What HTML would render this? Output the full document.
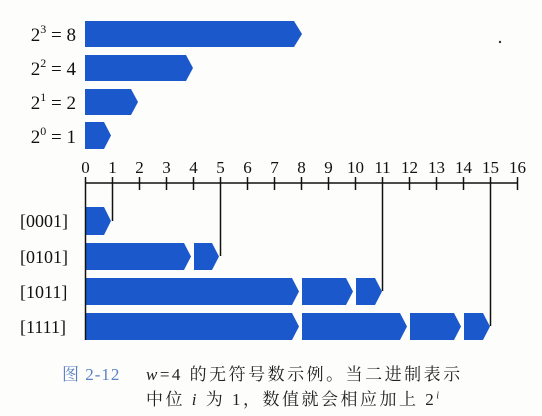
<!DOCTYPE html>
<html><head><meta charset="utf-8"><style>
body{margin:0;background:#fdfdfb;width:542px;height:416px;overflow:hidden;position:relative}
.cap{position:absolute;font-family:"Liberation Serif","Noto Serif CJK SC",serif;font-size:17px;color:#222;white-space:nowrap;letter-spacing:2.5px}
</style></head><body>
<svg width="542" height="416" style="position:absolute;left:0;top:0" font-family="Liberation Serif, serif" fill="#111">
<g fill="#1a58cc">
<polygon points="85,21 294,21 302,34 294,47 85,47"/>
<polygon points="85,55 186,55 193,68 186,81 85,81"/>
<polygon points="85,89 131,89 138,102 131,115 85,115"/>
<polygon points="85,122 104,122 111,135.5 104,149 85,149"/>
<polygon points="85,207 104,207 111,221 104,235 85,235"/>
<polygon points="85,243 184,243 191,256.5 184,270 85,270"/>
<polygon points="194,243 212,243 219,256.5 212,270 194,270"/>
<polygon points="85,278 292,278 299,291.5 292,305 85,305"/>
<polygon points="302,278 346,278 353,291.5 346,305 302,305"/>
<polygon points="356,278 375,278 382,291.5 375,305 356,305"/>
<polygon points="85,313 292,313 299,326.5 292,340 85,340"/>
<polygon points="302,313 400,313 407,326.5 400,340 302,340"/>
<polygon points="410,313 454,313 461,326.5 454,340 410,340"/>
<polygon points="464,313 483,313 490,326.5 483,340 464,340"/>
</g>
<g font-size="19" text-anchor="end">
<text x="76" y="41">2<tspan font-size="12" dy="-8">3</tspan><tspan dy="8"> = 8</tspan></text>
<text x="76" y="75">2<tspan font-size="12" dy="-8">2</tspan><tspan dy="8"> = 4</tspan></text>
<text x="76" y="109">2<tspan font-size="12" dy="-8">1</tspan><tspan dy="8"> = 2</tspan></text>
<text x="76" y="143">2<tspan font-size="12" dy="-8">0</tspan><tspan dy="8"> = 1</tspan></text>
</g>
<g font-size="17" text-anchor="middle">
<text x="85.5" y="173">0</text><text x="112.5" y="173">1</text><text x="139.5" y="173">2</text><text x="166.5" y="173">3</text><text x="193.5" y="173">4</text><text x="220.5" y="173">5</text><text x="247.5" y="173">6</text><text x="274.5" y="173">7</text><text x="301.5" y="173">8</text><text x="328.5" y="173">9</text><text x="355.5" y="173">10</text><text x="382.5" y="173">11</text><text x="409.5" y="173">12</text><text x="436.5" y="173">13</text><text x="463.5" y="173">14</text><text x="490.5" y="173">15</text><text x="517.5" y="173">16</text>
</g>
<g stroke="#111" stroke-width="1.5">
<line x1="85" y1="183" x2="518" y2="183"/>
<path d="M85.5 177V340 M112.5 177V221 M139.5 177V190 M166.5 177V190 M193.5 177V190 M220.5 177V256 M247.5 177V190 M274.5 177V190 M301.5 177V190 M328.5 177V190 M355.5 177V190 M382.5 177V291 M409.5 177V190 M436.5 177V190 M463.5 177V190 M490.5 177V326 M517.5 177V190"/>
</g>
<g font-size="18">
<text x="20" y="227">[0001]</text>
<text x="20" y="263">[0101]</text>
<text x="20" y="298">[1011]</text>
<text x="20" y="333">[1111]</text>
</g>
<circle cx="500" cy="42" r="1.2" fill="#333"/>
</svg>
<div class="cap" style="left:62px;top:360px;color:#5a80c4;letter-spacing:1px">图 2-12</div>
<div class="cap" style="left:146px;top:360px"><i>w</i>=4 的无符号数示例。当二进制表示</div>
<div class="cap" style="left:146px;top:385px">中位 <i>i</i> 为 1，数值就会相应加上 2<sup style="font-size:10px"><i>i</i></sup></div>
</body></html>
